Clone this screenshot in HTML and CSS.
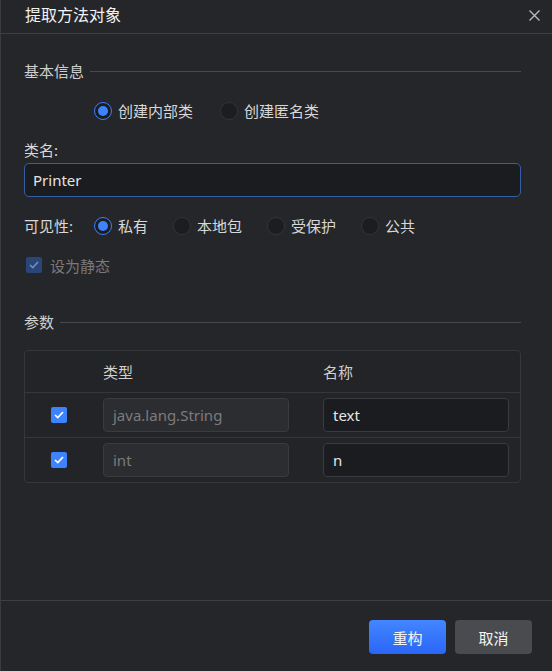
FILE: index.html
```html
<!DOCTYPE html>
<html lang="zh">
<head>
<meta charset="utf-8">
<link rel="stylesheet" href="styles.css">
</head>
<body>
<div class="dialog">
  <div class="header">
    <div class="title">提取方法对象</div>
    <svg class="close" width="11" height="11" viewBox="0 0 11 11"><path d="M0.5 0.5L10.5 10.5M10.5 0.5L0.5 10.5" stroke="#bdbdbd" stroke-width="1.3" fill="none"/></svg>
  </div>
  <div class="body">
    <div class="section first"><span>基本信息</span><div class="rule"></div></div>
    <div class="radios kind">
      <label class="radio"><span class="dot on"></span>创建内部类</label>
      <label class="radio"><span class="dot"></span>创建匿名类</label>
    </div>
    <div class="label">类名:</div>
    <div class="input focus">Printer</div>
    <div class="vis">
      <span class="vlabel">可见性:</span>
      <div class="radios group">
        <label class="radio"><span class="dot on"></span>私有</label>
        <label class="radio"><span class="dot"></span>本地包</label>
        <label class="radio"><span class="dot"></span>受保护</label>
        <label class="radio"><span class="dot"></span>公共</label>
      </div>
    </div>
    <div class="check-row">
      <span class="cbox disabled"><svg width="10" height="8" viewBox="0 0 10 8"><path d="M1 4L3.8 6.6L9 1" stroke="#6f8fc4" stroke-width="1.6" fill="none"/></svg></span>
      <span class="dim">设为静态</span>
    </div>
    <div class="section params"><span>参数</span><div class="rule"></div></div>
    <div class="table">
      <div class="trow thead">
        <div class="c1"></div>
        <div class="c2">类型</div>
        <div class="c3">名称</div>
      </div>
      <div class="trow">
        <div class="c1"><span class="cbox on"><svg width="10" height="8" viewBox="0 0 10 8"><path d="M1 4L3.8 6.6L9 1" stroke="#fff" stroke-width="1.7" fill="none"/></svg></span></div>
        <div class="c2"><div class="field ro">java.lang.String</div></div>
        <div class="c3"><div class="field">text</div></div>
      </div>
      <div class="trow">
        <div class="c1"><span class="cbox on"><svg width="10" height="8" viewBox="0 0 10 8"><path d="M1 4L3.8 6.6L9 1" stroke="#fff" stroke-width="1.7" fill="none"/></svg></span></div>
        <div class="c2"><div class="field ro">int</div></div>
        <div class="c3"><div class="field">n</div></div>
      </div>
    </div>
  </div>
  <div class="footer">
    <button class="btn primary">重构</button>
    <button class="btn">取消</button>
  </div>
</div>
</body>
</html>
```
FILE: styles.css
```css
* { box-sizing: border-box; }
html, body { margin: 0; padding: 0; background: #252629; }
body {
  font-family: "Noto Sans", "Noto Sans CJK SC", sans-serif;
  font-size: 15px;
  color: #d4d4d4;
}
.dialog {
  width: 552px;
  height: 671px;
  border-left: 1px solid #3b3c3f;
  display: flex;
  flex-direction: column;
  background: #252629;
}
.header {
  height: 34px;
  border-bottom: 1px solid #3e3f43;
  display: flex;
  align-items: center;
  justify-content: space-between;
  padding: 0 12px 3px 24px;
}
.title {
  font-size: 16px;
  color: #f2f2f2;
  line-height: 20px;
}
.close { display: block; }
.body {
  flex: 1;
  padding: 0 31px 0 23px;
}
.section {
  display: flex;
  align-items: center;
  height: 20px;
  color: #cfcfcf;
  line-height: 20px;
}
.section.first { margin-top: 27px; }
.section .rule {
  flex: 1;
  height: 1px;
  background: #48494d;
  margin-left: 6px;
}
.radios {
  display: flex;
  align-items: center;
  height: 20px;
  line-height: 20px;
}
.radios.kind { margin-top: 20px; padding-left: 70px; gap: 27px; }
.vis {
  margin-top: 19px;
  display: flex;
  align-items: center;
  height: 20px;
  line-height: 20px;
}
.vlabel { width: 70px; white-space: nowrap; color: #d8d8d8; }
.radios.group { gap: 25px; }
.radio {
  display: flex;
  align-items: center;
  gap: 6px;
  color: #d8d8d8;
  white-space: nowrap;
}
.dot {
  width: 18px;
  height: 18px;
  border-radius: 50%;
  background: #1c1d20;
  border: 1px solid #333438;
  position: relative;
  flex: none;
}
.dot.on {
  border: 1.5px solid #3d7eff;
  background: #1c1d20;
}
.dot.on::after {
  content: "";
  position: absolute;
  left: 50%;
  top: 50%;
  width: 10px;
  height: 10px;
  margin: -5px 0 0 -5px;
  border-radius: 50%;
  background: #3d83ff;
}
.label {
  margin-top: 19px;
  height: 20px;
  line-height: 20px;
  color: #d8d8d8;
}
.input {
  margin-top: 3px;
  height: 34px;
  border: 1.5px solid #345ea8;
  border-radius: 5px;
  background: #1b1c1f;
  color: #e4e4e4;
  padding: 0 8px;
  display: flex;
  align-items: center;
  font-size: 15px;
}
.check-row {
  margin-top: 19px;
  display: flex;
  align-items: center;
  gap: 8px;
  height: 20px;
  padding-left: 2px;
}
.cbox {
  width: 16px;
  height: 16px;
  border-radius: 2px;
  display: flex;
  align-items: center;
  justify-content: center;
}
.cbox.disabled { background: #2a4577; }
.cbox.on { background: #3d83ff; }
.dim { color: #7a7a7a; }
.section.params { margin-top: 37px; }
.table {
  margin-top: 18px;
  border: 1px solid #36373b;
  border-radius: 4px;
  background: #232427;
}
.trow {
  display: grid;
  grid-template-columns: 78px 220px 1fr;
  height: 45px;
  align-items: center;
  border-top: 1px solid #36373b;
}
.trow.thead { border-top: none; height: 41px; }
.thead .c2, .thead .c3 { color: #d0d0d0; }
.c1 { display: flex; justify-content: center; padding-right: 10px; }
.c3 { padding-right: 11px; }
.field {
  height: 34px;
  border: 1px solid #3a3b3f;
  border-radius: 4px;
  background: #1b1c1f;
  padding: 0 9px;
  display: flex;
  align-items: center;
  color: #e6e6e6;
}
.c2 .field { margin-right: 34px; }
.field.ro { background: #2c2d31; color: #7b7b7b; }
.footer {
  height: 71px;
  border-top: 1px solid #3e3f43;
  display: flex;
  justify-content: flex-end;
  align-items: flex-start;
  padding: 19px 20px 0 0;
  gap: 9px;
}
.btn {
  width: 77px;
  height: 34px;
  border: none;
  border-radius: 4px;
  font-family: "Noto Sans CJK SC", sans-serif;
  font-size: 15px;
  color: #f4f4f4;
  background: #4a4b4f;
}
.btn.primary {
  background: linear-gradient(#4386ff, #2a66f7);
}
```
